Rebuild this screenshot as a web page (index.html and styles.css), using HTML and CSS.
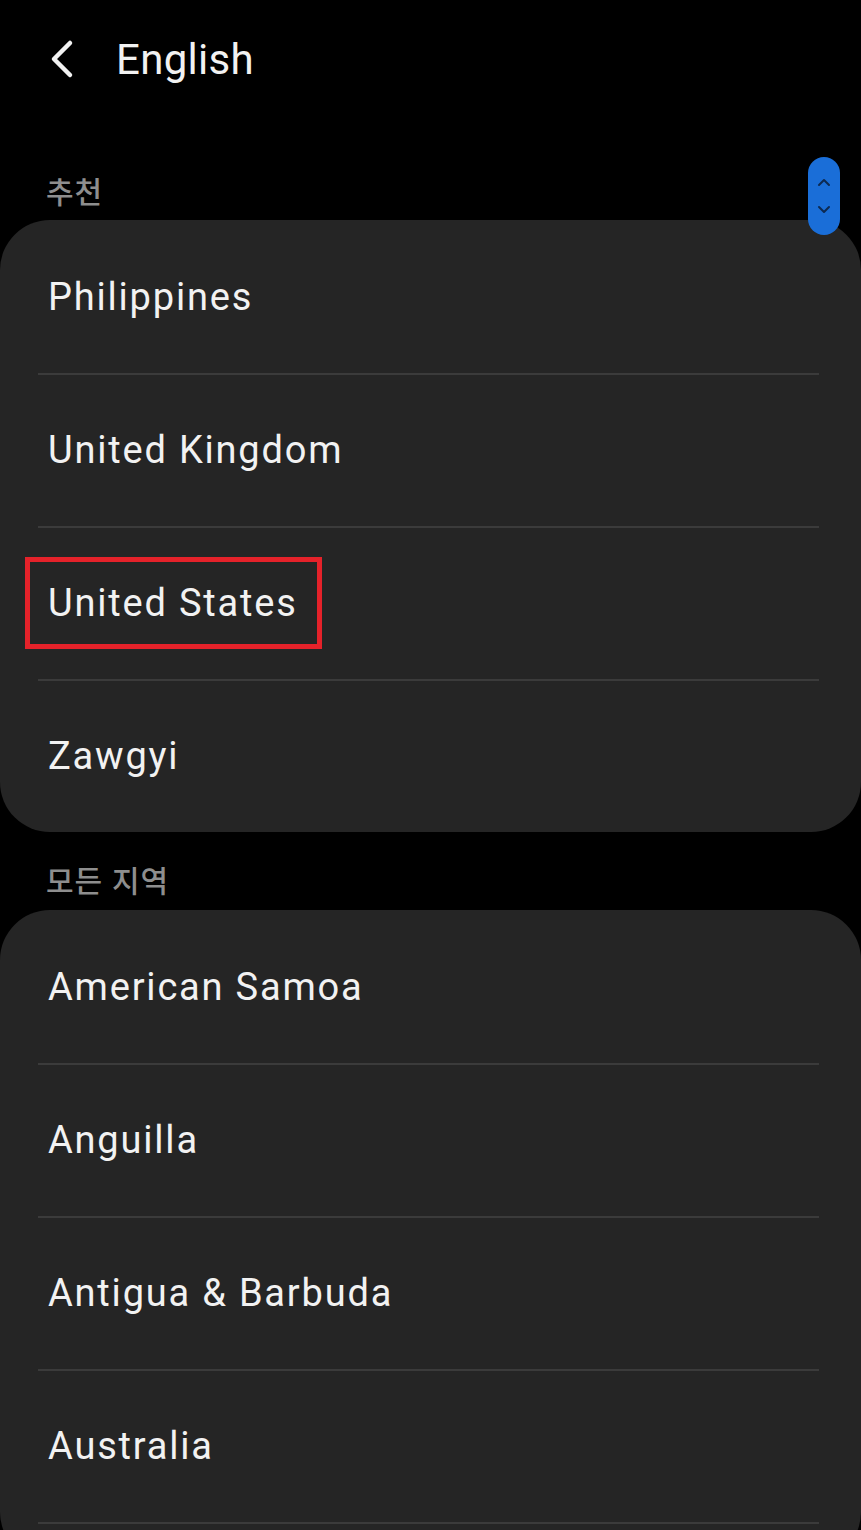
FILE: index.html
```html
<!DOCTYPE html>
<html lang="ko">
<head>
    <meta charset="UTF-8">
    <meta name="viewport" content="width=device-width, initial-scale=1.0">
    <title>English</title>
    <link rel="stylesheet" href="styles.css">
</head>
<body>

    <header class="top-bar">
        <svg class="back" width="28" height="40" viewBox="0 0 28 40">
            <path d="M22 4 L6 20 L22 36" fill="none" stroke="#f2f2f2" stroke-width="4.5" stroke-linecap="round" stroke-linejoin="round"/>
        </svg>
        <h1>English</h1>
    </header>

    <!-- Fast scroll thumb -->
    <div class="scroll-thumb">
        <svg width="14" height="44" viewBox="0 0 14 44">
            <path d="M2 11 L7 6 L12 11" fill="none" stroke="#0d2a52" stroke-width="2" stroke-linecap="round" stroke-linejoin="round"/>
            <path d="M2 33 L7 38 L12 33" fill="none" stroke="#0d2a52" stroke-width="2" stroke-linecap="round" stroke-linejoin="round"/>
        </svg>
    </div>

    <div class="section-label first">추천</div>
    <ul class="card">
        <li>Philippines</li>
        <li>United Kingdom</li>
        <li><span class="marked">United States</span></li>
        <li>Zawgyi</li>
    </ul>

    <div class="section-label">모든 지역</div>
    <ul class="card open-end">
        <li>American Samoa</li>
        <li>Anguilla</li>
        <li>Antigua &amp; Barbuda</li>
        <li>Australia</li>
    </ul>

</body>
</html>
```

FILE: styles.css
```css
body {
    margin: 0;
    background: #000;
    color: #f2f2f2;
    font-family: Roboto, "Noto Sans", "Noto Sans CJK KR", sans-serif;
    height: 1530px;
    overflow: hidden;
    position: relative;
}

.top-bar {
    height: 120px;
    display: flex;
    align-items: center;
    padding-left: 48px;
}

.back {
    margin-right: 40px;
    margin-top: -2px;
}

.top-bar h1 {
    margin: 0;
    margin-top: -2px;
    font-size: 42px;
    font-weight: 400;
    letter-spacing: 0.3px;
    color: #f2f2f2;
}

.scroll-thumb {
    position: absolute;
    left: 808px;
    top: 157px;
    width: 32px;
    height: 78px;
    border-radius: 16px;
    background: #1a6ed8;
    display: flex;
    align-items: center;
    justify-content: center;
}

.section-label {
    font-family: "Noto Sans CJK KR", sans-serif;
    font-size: 30px;
    font-weight: 500;
    letter-spacing: 0.8px;
    color: #8e8e8e;
    padding-left: 46px;
    height: 78px;
    line-height: 94px;
}

.section-label.first {
    height: 100px;
    line-height: 140px;
}

.card {
    list-style: none;
    margin: 0;
    padding: 0;
    background: #252525;
    border-radius: 50px;
}

.card li {
    height: 153px;
    display: flex;
    align-items: center;
    padding-left: 48px;
    font-size: 38px;
    letter-spacing: 1.8px;
    color: #f2f2f2;
    position: relative;
}

.card li + li::before,
.open-end li:last-child::after {
    content: "";
    position: absolute;
    left: 38px;
    right: 42px;
    top: 0;
    height: 2px;
    background: #3b3b3b;
}

.open-end li:last-child::after {
    top: auto;
    bottom: -2px;
}

.open-end {
    padding-bottom: 40px;
}

.marked {
    border: 5px solid #e5222a;
    padding: 0 19px 0 18px;
    margin-left: -23px;
    line-height: 82px;
}
```
